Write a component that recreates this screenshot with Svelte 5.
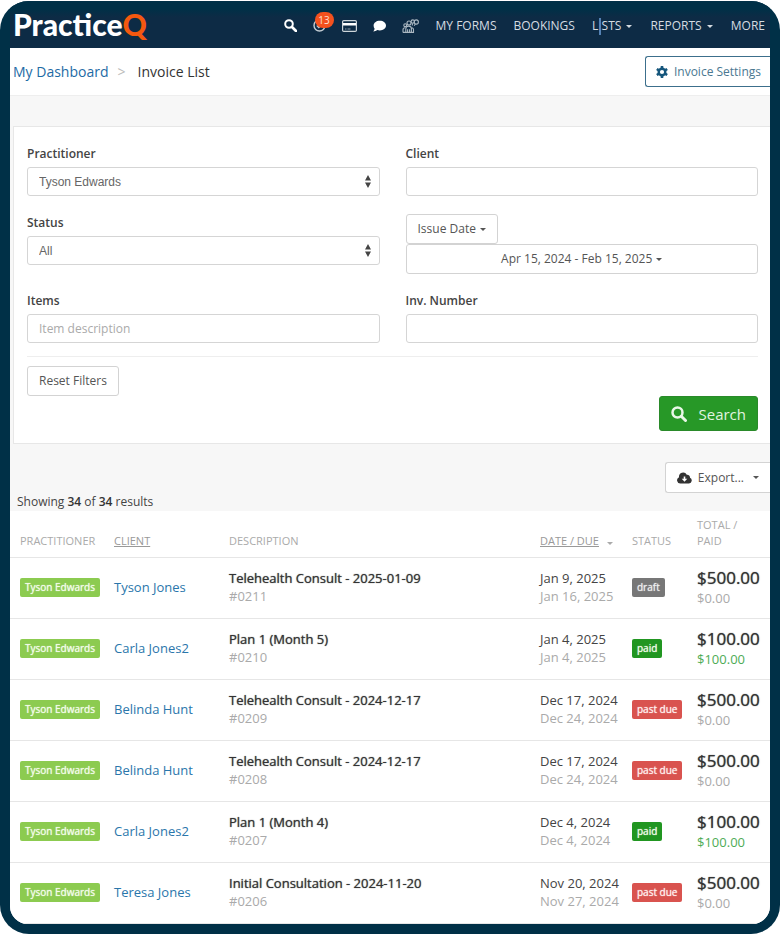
<script>
	let practitioner = 'Tyson Edwards';
	let status = 'All';
	let client = '';
	let item = '';
	let invNumber = '';

	const invoices = [
		{ client: 'Tyson Jones', description: 'Telehealth Consult - 2025-01-09', number: '#0211', date: 'Jan 9, 2025', due: 'Jan 16, 2025', status: 'draft', total: '$500.00', paid: '$0.00' },
		{ client: 'Carla Jones2', description: 'Plan 1 (Month 5)', number: '#0210', date: 'Jan 4, 2025', due: 'Jan 4, 2025', status: 'paid', total: '$100.00', paid: '$100.00' },
		{ client: 'Belinda Hunt', description: 'Telehealth Consult - 2024-12-17', number: '#0209', date: 'Dec 17, 2024', due: 'Dec 24, 2024', status: 'past due', total: '$500.00', paid: '$0.00' },
		{ client: 'Belinda Hunt', description: 'Telehealth Consult - 2024-12-17', number: '#0208', date: 'Dec 17, 2024', due: 'Dec 24, 2024', status: 'past due', total: '$500.00', paid: '$0.00' },
		{ client: 'Carla Jones2', description: 'Plan 1 (Month 4)', number: '#0207', date: 'Dec 4, 2024', due: 'Dec 4, 2024', status: 'paid', total: '$100.00', paid: '$100.00' },
		{ client: 'Teresa Jones', description: 'Initial Consultation - 2024-11-20', number: '#0206', date: 'Nov 20, 2024', due: 'Nov 27, 2024', status: 'past due', total: '$500.00', paid: '$0.00' }
	];

	function resetFilters() {
		practitioner = 'Tyson Edwards';
		status = 'All';
		client = '';
		item = '';
		invNumber = '';
	}
</script>

<div class="frame">
	<header>
		<a class="logo" href="#home">Practice<span>Q</span></a>
		<nav>
			<div class="icons">
				<a class="icon" href="#search" aria-label="Search">
					<svg width="13" height="13" viewBox="0 0 13 13" fill="none" stroke="#fff" stroke-width="2">
						<circle cx="5" cy="5" r="3.8" />
						<path d="M8 8l4 4" stroke-width="2.6" stroke-linecap="round" />
					</svg>
				</a>
				<a class="icon tasks" href="#tasks" aria-label="Tasks">
					<svg width="13" height="13" viewBox="0 0 13 13" fill="none" stroke="#c3ccd3" stroke-width="1.4">
						<circle cx="6.5" cy="6.5" r="5.5" />
						<path d="M3.8 6.5l2 2 4-4" />
					</svg>
					<span class="count">13</span>
				</a>
				<a class="icon" href="#payments" aria-label="Payments">
					<svg width="15" height="12" viewBox="0 0 15 12">
						<rect x=".6" y=".6" width="13.8" height="10.8" rx="1.2" fill="none" stroke="#cdd5da" stroke-width="1.2" />
						<path d="M1 3h13v2.4H1z" fill="#fff" />
						<path d="M3 9h1.5M5.5 9h3" stroke="#8fa0ad" />
					</svg>
				</a>
				<a class="icon" href="#messages" aria-label="Messages">
					<svg width="13" height="12" viewBox="0 0 13 12" fill="#fff">
						<path d="M6.8.8C10.3.8 13 2.9 13 5.6s-2.7 4.8-6.2 4.8c-.9 0-1.7-.1-2.4-.4C3.3 10.9 1.9 11.4.3 11.4c.8-.8 1.2-1.7 1.3-2.6C.9 7.9.6 6.8.6 5.6.6 2.9 3.3.8 6.8.8z" />
					</svg>
				</a>
				<a class="icon" href="#community" aria-label="Community">
					<svg width="17" height="14" viewBox="0 0 17 14" fill="none" stroke="#aab7c1" stroke-width="1.1">
						<circle cx="7" cy="4" r="2" />
						<circle cx="3.2" cy="6.2" r="1.4" />
						<path d="M1 13.400v-2.600q0-2 2-2M3.800 13.400V9.800q0-2.700 2.800-2.700T9.400 9.800v3.600M5.600 13.400v-3.200M7.600 13.400v-3.200M1 13.400h10.500v-2.800q0-1.600-1.600-1.900" />
						<circle cx="10.800" cy="2.600" r="1.700" />
						<circle cx="14.300" cy="3" r="2.100" />
						<path d="M10.400 4.400v2.200M13.400 5l-1.200 1.800" />
					</svg>
				</a>
			</div>
			<a href="#forms">MY FORMS</a>
			<a href="#bookings">BOOKINGS</a>
			<a class="lists" href="#lists">LISTS <i class="caret"></i></a>
			<a href="#reports">REPORTS <i class="caret"></i></a>
			<a href="#more">MORE</a>
		</nav>
	</header>

	<main>
		<div class="title-bar">
			<div class="crumbs">
				<a href="#dashboard">My Dashboard</a>
				<span class="sep">&gt;</span>
				<span>Invoice List</span>
			</div>
			<button class="settings">
				<svg width="12" height="12" viewBox="0 0 12 12">
					<circle cx="6" cy="6" r="3.3" fill="none" stroke="#15567c" stroke-width="2.4" />
					<path d="M6 0v2.500M6 9.500V12M.8 3l2.200 1.300M9 7.700L11.200 9M.8 9L3 7.700M9 4.300L11.200 3" stroke="#15567c" stroke-width="2.6" />
				</svg>
				Invoice Settings
			</button>
		</div>

		<form class="filters" on:submit|preventDefault>
			<div class="grid">
				<div class="field">
					<label for="practitioner">Practitioner</label>
					<div class="select">
						<select id="practitioner" bind:value={practitioner}>
							<option>Tyson Edwards</option>
						</select>
						<svg width="6" height="13" viewBox="0 0 6 13" fill="#444"><path d="M0 5.500L3 0l3 5.500zM0 7.500L3 13l3-5.500z" /></svg>
					</div>
				</div>
				<div class="field">
					<label for="client">Client</label>
					<input id="client" type="text" bind:value={client} />
				</div>
				<div class="field">
					<label for="status">Status</label>
					<div class="select">
						<select id="status" bind:value={status}>
							<option>All</option>
							<option>draft</option>
							<option>paid</option>
							<option>past due</option>
						</select>
						<svg width="6" height="13" viewBox="0 0 6 13" fill="#444"><path d="M0 5.500L3 0l3 5.500zM0 7.500L3 13l3-5.500z" /></svg>
					</div>
				</div>
				<div class="field dates">
					<button type="button" class="btn">Issue Date <i class="caret"></i></button>
					<button type="button" class="btn range">Apr 15, 2024 - Feb 15, 2025 <i class="caret"></i></button>
				</div>
				<div class="field">
					<label for="item">Items</label>
					<input id="item" type="text" placeholder="Item description" bind:value={item} />
				</div>
				<div class="field">
					<label for="inv-number">Inv. Number</label>
					<input id="inv-number" type="text" bind:value={invNumber} />
				</div>
			</div>
			<hr />
			<button type="button" class="btn" on:click={resetFilters}>Reset Filters</button>
			<div class="actions">
				<button class="search" type="submit">
					<svg width="16" height="16" viewBox="0 0 16 16" fill="none" stroke="#e9f7e7" stroke-width="2.5">
						<circle cx="6.5" cy="6.5" r="5" />
						<path d="M10.300 10.300l4.200 4.200" stroke-width="3" stroke-linecap="round" />
					</svg>
					Search
				</button>
			</div>
		</form>

		<div class="results-bar">
			<p>Showing <b>34</b> of <b>34</b> results</p>
			<button class="btn export">
				<svg width="15" height="12" viewBox="0 0 15 12">
					<path d="M3.500 11.500A3.300 3.300 0 0 1 2 5.200 4.200 4.200 0 0 1 9.800 2.700 2.800 2.800 0 0 1 13 5.800 3 3 0 0 1 12 11.500z" fill="#333" />
					<path d="M7.500 4.500v3" stroke="#fff" stroke-width="1.6" />
					<path d="M4.700 6.800h5.600L7.500 9.800z" fill="#fff" />
				</svg>
				<span>Export...</span>
				<i class="caret"></i>
			</button>
		</div>

		<table>
			<thead>
				<tr>
					<th class="c-practitioner">PRACTITIONER</th>
					<th class="c-client"><a href="#sort-client">CLIENT</a></th>
					<th>DESCRIPTION</th>
					<th class="c-date"><a href="#sort-date">DATE / DUE</a> <i class="caret"></i></th>
					<th class="c-status">STATUS</th>
					<th class="c-total">TOTAL / PAID</th>
				</tr>
			</thead>
			<tbody>
				{#each invoices as invoice}
					<tr>
						<td><span class="tag">Tyson Edwards</span></td>
						<td><a href="#client">{invoice.client}</a></td>
						<td>
							<strong>{invoice.description}</strong>
							<div class="muted">{invoice.number}</div>
						</td>
						<td>
							<div>{invoice.date}</div>
							<div class="muted">{invoice.due}</div>
						</td>
						<td><span class="tag {invoice.status.replace(' ', '-')}">{invoice.status}</span></td>
						<td>
							<div class="total">{invoice.total}</div>
							<div class="muted" class:green={invoice.status == 'paid'}>{invoice.paid}</div>
						</td>
					</tr>
				{/each}
			</tbody>
		</table>
	</main>
</div>

<style>
	:global(body) {
		background: #fff;
	}

	.frame {
		box-sizing: border-box;
		margin: 1px 1px 0 0;
		padding: 0 10px 10px;
		border-radius: 29px;
		background: #003047;
		overflow: hidden;
		font-family: "Open Sans", "Noto Sans", sans-serif;
		font-size: 12px;
		line-height: 18px;
		color: #444;
	}

	a {
		color: #2a76ab;
		text-decoration: none;
	}

	button, input, select {
		font: inherit;
		color: #555;
	}

	button {
		cursor: pointer;
	}

	header {
		box-sizing: border-box;
		display: flex;
		align-items: center;
		justify-content: space-between;
		height: 47px;
		padding: 2px 5px 0 3px;
		background: linear-gradient(#003047 8px, #0d2b45 16px);
		white-space: nowrap;
	}

	.logo {
		font-family: Lato, sans-serif;
		font-size: 30px;
		font-weight: 900;
		line-height: 38px;
		padding-bottom: 4px;
		color: #fff;
	}

	.logo span {
		color: #f4580f;
	}

	nav, .icons {
		display: flex;
		align-items: center;
		gap: 17px;
	}

	.icons {
		gap: 16px;
	}

	nav a {
		position: relative;
		color: #d5dce1;
	}

	.icon {
		display: flex;
	}

	.count {
		position: absolute;
		left: 2px;
		top: -7px;
		width: 19px;
		height: 16px;
		border-radius: 8px;
		background: #f4511e;
		color: #ffe0d4;
		font-size: 10px;
		line-height: 16px;
		text-align: center;
	}

	/* text cursor over the menu item */
	.lists::after {
		content: "";
		position: absolute;
		left: 7px;
		top: 1px;
		width: 2px;
		height: 17px;
		background: #5583b5;
	}

	.caret {
		display: inline-block;
		border: 3px solid transparent;
		border-top-color: currentColor;
		border-bottom: 0;
		margin-left: 1px;
		vertical-align: 2px;
	}

	nav .caret {
		margin-left: 2px;
		margin-right: 1px;
	}

	main {
		background: #f7f7f7;
		border-radius: 0 0 18px 18px;
		overflow: hidden;
	}

	.title-bar {
		display: flex;
		justify-content: space-between;
		align-items: center;
		height: 47px;
		padding-left: 3px;
		background: #fff;
		border-bottom: 1px solid #eee;
	}

	.crumbs {
		display: flex;
		gap: 9px;
		font-size: 14px;
		line-height: 20px;
		color: #333;
	}

	.crumbs a {
		color: #1d6ba5;
	}

	.sep {
		margin-right: 3px;
		color: #bbb;
	}

	.settings {
		display: flex;
		align-items: center;
		gap: 6px;
		height: 31px;
		padding: 0 9px 0 10px;
		border: 1px solid #3c6f8c;
		border-right: 0;
		border-radius: 3px 0 0 3px;
		background: #fff;
		color: #4a7891;
	}

	.filters {
		margin: 30px 0 0 3px;
		padding: 18px 12px 12px 13px;
		border: 1px solid #e7e7e7;
		border-right: 0;
		background: #fff;
	}

	.grid {
		display: grid;
		grid-template-columns: 1fr 1fr;
		column-gap: 26px;
		row-gap: 18px;
	}

	.field label {
		display: block;
		margin-bottom: 4px;
		font-weight: 600;
		color: #444;
	}

	input, select {
		display: block;
		box-sizing: border-box;
		width: 100%;
		height: 29px;
		padding: 0 11px;
		border: 1px solid #d5d5d5;
		border-radius: 3px;
		background: #fff;
	}

	input::placeholder {
		color: #aaa;
	}

	.select {
		position: relative;
	}

	select {
		appearance: none;
		font-family: "Liberation Sans", Arial, sans-serif;
		color: #666;
	}

	.select svg {
		position: absolute;
		right: 9px;
		top: 8px;
		pointer-events: none;
	}

	.dates {
		display: flex;
		flex-direction: column;
		align-items: flex-start;
	}

	.btn {
		height: 30px;
		padding: 0 11px;
		border: 1px solid #d3d3d3;
		border-radius: 3px;
		background: #fff;
		color: #555;
	}

	.range {
		width: 100%;
	}

	hr {
		margin: 13px 0 9px;
		border: 0;
		border-top: 1px solid #eee;
	}

	.actions {
		display: flex;
		justify-content: flex-end;
	}

	.search {
		display: flex;
		align-items: center;
		gap: 12px;
		height: 35px;
		padding: 0 11px;
		border: 1px solid #2a8a2a;
		border-radius: 3px;
		background: #279827;
		color: #e2f4e0;
		font-size: 15px;
	}

	.results-bar {
		display: flex;
		justify-content: space-between;
		height: 67px;
		padding-left: 7px;
	}

	.results-bar p {
		align-self: flex-end;
		margin: 0;
	}

	.results-bar b {
		font-weight: 600;
		color: #333;
	}

	.export {
		display: flex;
		align-items: center;
		gap: 6px;
		height: 31px;
		margin-top: 18px;
		border-right: 0;
		border-radius: 3px 0 0 3px;
	}

	.export .caret {
		margin-left: 3px;
	}

	table {
		width: 100%;
		border-collapse: collapse;
		table-layout: fixed;
		background: #fff;
	}

	th, td {
		padding: 0 0 2px 10px;
		text-align: left;
	}

	th {
		height: 38px;
		padding-bottom: 8px;
		vertical-align: bottom;
		font-size: 11px;
		font-weight: 400;
		line-height: 16px;
		color: #aaa;
	}

	th a {
		color: #999;
		text-decoration: underline;
	}

	th .caret {
		margin-left: 5px;
		vertical-align: 0;
	}

	td {
		height: 58px;
		border-top: 1px solid #e6e6e6;
		border-bottom: 1px solid #e6e6e6;
		font-size: 13px;
	}

	.c-practitioner {
		width: 84px;
	}

	.c-client {
		width: 105px;
	}

	.c-date {
		width: 82px;
	}

	.c-status {
		width: 55px;
	}

	.c-total {
		width: 50px;
		padding-right: 23px;
	}

	strong, .total {
		font-weight: 500;
		color: #333;
		text-shadow: 0 0 1px #555;
	}

	.muted {
		color: #aaa;
	}

	.total {
		font-size: 17px;
		line-height: 22px;
	}

	.green {
		color: #4eac56;
	}

	.tag {
		display: inline-block;
		padding: 0 5px;
		border-radius: 2px;
		background: #8ccb50;
		color: #f4fcec;
		font-size: 10px;
		font-weight: 500;
		line-height: 19px;
		text-shadow: 0 0 1px currentColor;
		white-space: nowrap;
	}

	.draft {
		background: #777;
		color: #eee;
	}

	.paid {
		background: #219621;
	}

	.past-due {
		background: #d9534f;
		color: #fff0ef;
	}
</style>
